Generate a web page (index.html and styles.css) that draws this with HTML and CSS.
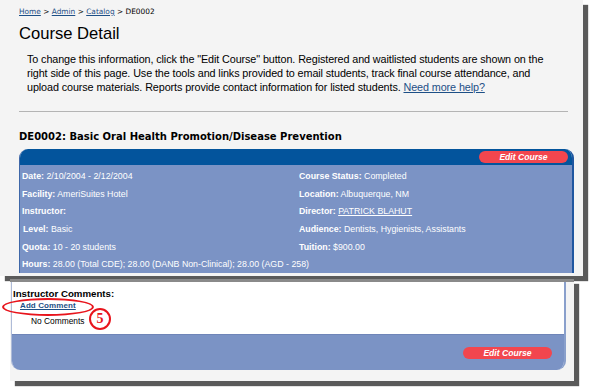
FILE: index.html
```html
<!DOCTYPE html>
<html lang="en">
<head>
    <meta charset="UTF-8">
    <title>Course Detail</title>
    <link rel="stylesheet" href="styles.css">
</head>
<body>
    <div class="shot top">
        <div class="crumbs">
            <a href="#">Home</a> &gt; <a href="#">Admin</a> &gt; <a href="#">Catalog</a> &gt; DE0002
        </div>
        <h1>Course Detail</h1>
        <p class="intro">
            To change this information, click the "Edit Course" button. Registered and waitlisted students are shown on the<br>
            right side of this page. Use the tools and links provided to email students, track final course attendance, and<br>
            upload course materials. Reports provide contact information for listed students. <a href="#">Need more help?</a>
        </p>
        <hr>
        <h2>DE0002: Basic Oral Health Promotion/Disease Prevention</h2>
        <div class="course">
            <div class="bar"><span class="edit">Edit Course</span></div>
            <div class="rows">
                <div><b>Date:</b> 2/10/2004 - 2/12/2004</div>
                <div><b>Course Status:</b> Completed</div>
                <div><b>Facility:</b> AmeriSuites Hotel</div>
                <div><b>Location:</b> Albuquerque, NM</div>
                <div><b>Instructor:</b></div>
                <div><b>Director:</b> <a href="#">PATRICK BLAHUT</a></div>
                <div class="indent"><b>Level:</b> Basic</div>
                <div><b>Audience:</b> Dentists, Hygienists, Assistants</div>
                <div><b>Quota:</b> 10 - 20 students</div>
                <div><b>Tuition:</b> $900.00</div>
                <div class="wide"><b>Hours:</b> 28.00 (Total CDE); 28.00 (DANB Non-Clinical); 28.00 (AGD - 258)</div>
            </div>
        </div>
    </div>

    <div class="shot bottom">
        <div class="course cut">
            <div class="comments">
                <div class="label">Instructor Comments:</div>
                <a class="add" href="#">Add Comment</a>
                <div class="none">No Comments</div>
            </div>
            <div class="foot"><span class="edit">Edit Course</span></div>
        </div>
        <div class="ring"></div>
        <div class="step">5</div>
    </div>
</body>
</html>
```

FILE: styles.css
```css
html {
    background: #ffffff;
}

body {
    margin: 0;
    width: 590px;
    height: 388px;
    overflow: hidden;
    font-family: "Liberation Sans", Arial, sans-serif;
    color: #000;
}

div.shot {
    background: #f4f4f4;
    box-shadow: 5px 5px 1px #5a5a5a;
}

div.top {
    width: 564px;
    height: 276px;
    padding-left: 19px;
}

div.crumbs {
    padding-top: 7px;
    font-family: "DejaVu Sans", Verdana, sans-serif;
    font-size: 7.4px;
    line-height: 10px;
}

div.crumbs a {
    color: #1d4f86;
}

h1 {
    margin: 8px 0 0 0;
    font-size: 16.6px;
    line-height: 18px;
    font-weight: normal;
}

p.intro {
    margin: 9px 0 0 8px;
    width: 550px;
    white-space: nowrap;
    font-size: 10.8px;
    line-height: 14px;
    letter-spacing: -0.1px;
}

p.intro a {
    color: #1d4f86;
}

hr {
    margin: 17px 0 0 0;
    width: 549px;
    border: 0;
    border-top: 1px solid #b4b4b4;
}

h2 {
    margin: 18px 0 0 0;
    font-family: "DejaVu Sans", Verdana, sans-serif;
    font-size: 10px;
    line-height: 13px;
}

div.course {
    width: 552px;
    margin-top: 6px;
    border-left: 1px solid #3e67a8;
    border-right: 2px solid #1f56a0;
    border-radius: 9px 9px 0 0;
    overflow: hidden;
}

div.bar {
    height: 16px;
    background: #03549c;
    display: flex;
    justify-content: flex-end;
    align-items: center;
    padding-right: 4px;
}

span.edit {
    width: 89px;
    height: 12px;
    border-radius: 6px;
    background: #f2464e;
    color: #fff;
    font-size: 8.6px;
    font-weight: bold;
    font-style: italic;
    line-height: 12px;
    text-align: center;
}

div.rows {
    background: #7b93c5;
    display: grid;
    grid-template-columns: 277px 1fr;
    grid-auto-rows: 17.7px;
    padding: 2px 0 0 2px;
    height: 106px;
    color: #fff;
    font-size: 8.8px;
    line-height: 18px;
}

div.rows a {
    color: #fff;
}

div.rows .indent {
    padding-left: 1px;
}

div.rows .wide {
    grid-column: 1 / 3;
}

div.bottom {
    position: relative;
    width: 564px;
    height: 102px;
    margin: 3px 0 0 10px;
    border-top: 3px solid #8a8a8a;
    box-sizing: border-box;
}

div.course.cut {
    margin: 0 0 0 1px;
    border-left: 1px solid #aebbd8;
    border-right: 2px solid #8aa0cc;
    border-radius: 0 0 9px 9px;
}

div.comments {
    background: #fff;
    height: 52px;
    padding: 6px 0 0 3px;
    box-sizing: border-box;
}

div.comments .label {
    font-size: 9.7px;
    font-weight: bold;
    line-height: 12px;
    margin-left: -2px;
}

a.add {
    display: block;
    margin: 0 0 0 5px;
    color: #1d4f86;
    font-size: 8px;
    font-weight: bold;
    line-height: 12px;
    letter-spacing: 0.1px;
}

div.none {
    margin: 3px 0 0 16px;
    font-size: 8.4px;
    line-height: 12px;
}

div.foot {
    height: 35px;
    background: #7b93c5;
    border-top: 1px solid #6f85b8;
    display: flex;
    justify-content: flex-end;
    align-items: center;
    padding-right: 12px;
}

/* annotation marks drawn over the screenshot */
div.ring {
    position: absolute;
    left: -8px;
    top: 16px;
    width: 88px;
    height: 14px;
    border: 2px solid #e8141c;
    border-radius: 50%;
}

div.step {
    position: absolute;
    left: 79px;
    top: 26px;
    width: 18px;
    height: 18px;
    border: 2px solid #e8141c;
    border-radius: 50%;
    background: #fff;
    color: #e8141c;
    font-family: "Liberation Serif", serif;
    font-weight: bold;
    font-size: 14px;
    line-height: 18px;
    text-align: center;
}
```
